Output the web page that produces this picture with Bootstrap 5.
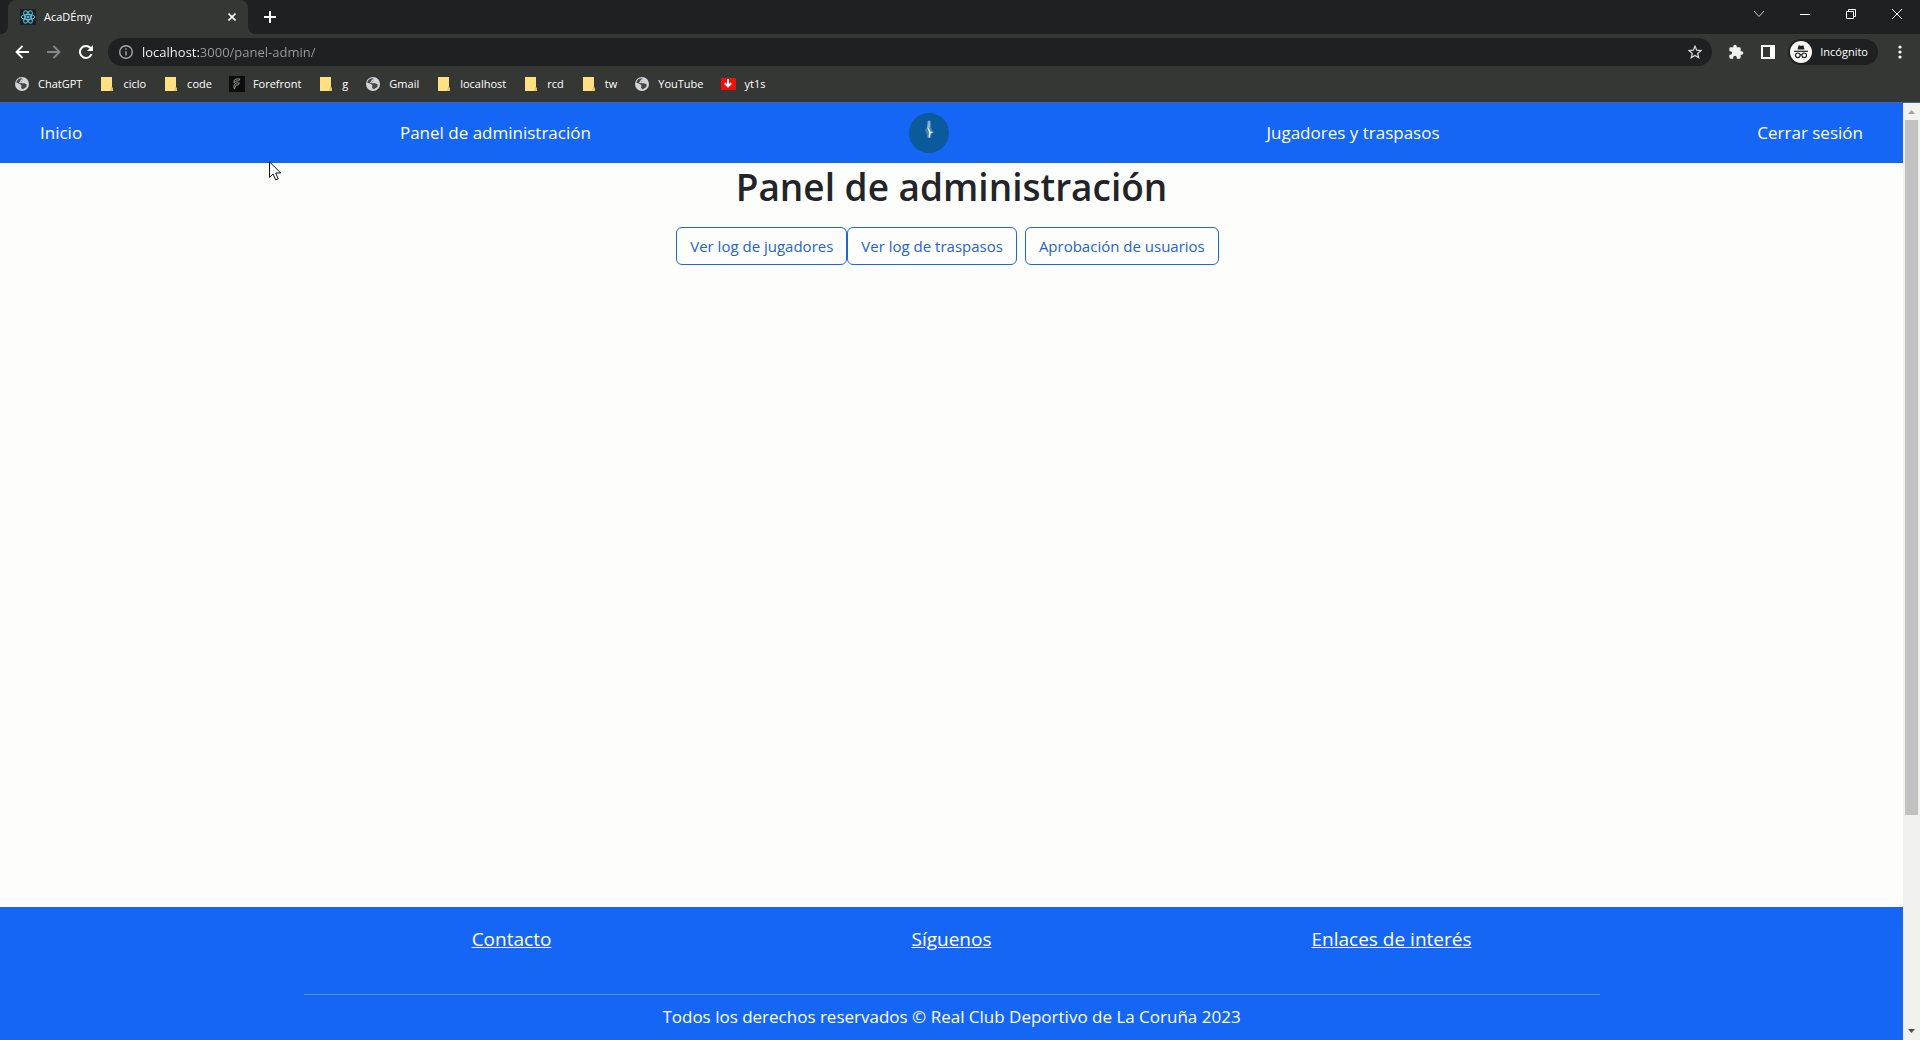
<!DOCTYPE html>
<html lang="es">
<head>
<meta charset="utf-8">
<meta name="viewport" content="width=device-width, initial-scale=1">
<title>AcaDÉmy</title>
<link href="https://cdn.jsdelivr.net/npm/bootstrap@5.3.0/dist/css/bootstrap.min.css" rel="stylesheet">
<style>
  :root { --frame: #1f2022; --toolbar: #353735; --brand-blue: #1566f5; }
  body { font-family: "Open Sans", "Noto Sans", sans-serif; background: #fdfdfc; }
  button, input { font-family: inherit; }
  svg { display: block; flex: none; }

  /* browser window */
  .chrome-ui { font-size: 11px; line-height: 16px; color: #fff; background: var(--toolbar); border-bottom: 1px solid #46649a; }
  .tab-strip { height: 34px; background: var(--frame); padding-left: 8px; }
  .browser-tab { width: 240px; background: var(--toolbar); border-radius: 8px 8px 0 0; padding: 0 12px; position: relative; }
  .browser-tab::before, .browser-tab::after { content: ""; position: absolute; bottom: 0; width: 8px; height: 8px; }
  .browser-tab::before { left: -8px; background: radial-gradient(circle at 0 0, transparent 8px, var(--toolbar) 8px); }
  .browser-tab::after { right: -8px; background: radial-gradient(circle at 100% 0, transparent 8px, var(--toolbar) 8px); }
  .ui-btn { background: none; border: 0; padding: 0; color: #fff; display: flex; align-items: center; justify-content: center; }
  .win-btn { width: 46px; height: 28px; }
  .tool-row { height: 36px; padding: 0 10px 0 6px; }
  .tool-btn { width: 32px; height: 28px; }
  .omnibox { height: 28px; border-radius: 14px; background: var(--frame); padding: 0 10px; margin-left: 6px; }
  .url-field { min-width: 0; border: 0; outline: 0; padding: 0; font-size: 13px;
    color: transparent; background: linear-gradient(90deg, #fff 57px, #999da2 57px); -webkit-background-clip: text; background-clip: text; }
  .profile-pill { height: 26px; border-radius: 13px; background: var(--frame); padding: 0 10px 0 2px; gap: 8px; }
  .bookmark-row { height: 32px; padding: 0 14px 4px; gap: 17px; }
  .bookmark-row a { color: #fff; text-decoration: none; display: flex; align-items: center; gap: 8px; }

  /* scrollbar */
  .scroll-track { width: 17px; background: #f1f1ee; }
  .scroll-end { height: 17px; }
  .scroll-body { padding: 0 2px 0 2px; }
  .scroll-thumb { height: 77%; background: #c1c1c1; }

  /* page */
  .site-nav { background: var(--brand-blue); height: 60px; padding: 0 40px; font-size: 17px; }
  .site-nav a, .site-footer a { color: #fff; }
  .site-nav a { text-decoration: none; }
  .page-title { font-size: 37px; line-height: 48px; font-weight: 600; color: #212529; }
  .panel-btn { --bs-btn-color: #2563cf; --bs-btn-border-color: #1b66e6; --bs-btn-padding-x: 13px; font-size: 15px; line-height: 24px; }
  .site-footer { background: var(--brand-blue); color: #fff; padding-top: 20px; }
  .foot-title { font-size: 19px; line-height: 24px; margin-bottom: 43px; }
  .foot-line { margin: 0 0 8px; border-color: #fff; opacity: .25; }
  .foot-note { font-size: 17px; line-height: 27px; margin-bottom: 10px; }
  .pointer { position: fixed; left: 269px; top: 161px; z-index: 5; }
</style>
<script src="https://cdn.jsdelivr.net/npm/bootstrap@5.3.0/dist/js/bootstrap.bundle.min.js"></script>
</head>
<body class="vh-100 d-flex flex-column overflow-hidden">

<svg class="d-none" aria-hidden="true">
  <symbol id="globe" viewBox="0 0 16 16"><circle cx="8" cy="8" r="7" fill="#d2d4d6"/><path d="M2.200 6.500 6 8l1.500 1.500L7 12l1.800 1.300 3.600-2.300.3-2.500-2.200-1.200H8L6.600 6.400 8.500 5l.6-2L7 2.200C4.600 2.500 3 4 2.200 6.500Z" fill="#45474a"/><path d="M7 3.500 9.500 3l-.8 2L6.500 6l1 1.300L5 7Z" fill="#d2d4d6"/></symbol>
  <symbol id="folder" viewBox="0 0 16 16"><path d="M2 1h11v11l1 3H2Z" fill="#ffe082"/><path d="M12.200 10.500 14 12v3h-3Z" fill="#f0c455"/></symbol>
</svg>

<header class="chrome-ui flex-shrink-0">
  <div class="tab-strip d-flex">
    <div class="browser-tab d-flex align-items-center gap-2">
      <svg width="16" height="16" viewBox="0 0 16 16" fill="none" stroke="#61c6de"><rect width="16" height="16" fill="#1c2126" stroke="none"/><ellipse cx="8" cy="8" rx="6.800" ry="2.600"/><ellipse cx="8" cy="8" rx="6.800" ry="2.600" transform="rotate(60 8 8)"/><ellipse cx="8" cy="8" rx="6.800" ry="2.600" transform="rotate(120 8 8)"/><circle cx="8" cy="8" r="1" fill="#61c6de"/></svg>
      <span class="flex-grow-1">AcaDÉmy</span>
      <button class="ui-btn" aria-label="Cerrar pestaña"><svg width="8" height="8" viewBox="0 0 8 8" stroke="#fff" stroke-width="1.600"><path d="M.5.5l7 7M7.500.5l-7 7"/></svg></button>
    </div>
    <button class="ui-btn ms-3" aria-label="Nueva pestaña"><svg width="12" height="12" viewBox="0 0 12 12" stroke="#fff" stroke-width="2"><path d="M6 0v12M0 6h12"/></svg></button>
    <div class="d-flex ms-auto">
      <button class="ui-btn win-btn" aria-label="Buscar pestañas"><svg width="12" height="8" viewBox="0 0 12 8" fill="none" stroke="#cfcfcf"><path d="M1 1l5 5.500L11 1"/></svg></button>
      <button class="ui-btn win-btn" aria-label="Minimizar"><svg width="10" height="10" viewBox="0 0 10 10" stroke="#fff"><path d="M0 5.500h10"/></svg></button>
      <button class="ui-btn win-btn" aria-label="Restaurar"><svg width="10" height="10" viewBox="0 0 10 10" fill="none" stroke="#fff"><path d="M.5 2.500h7v7h-7zM2.500 2.500v-2h7v7h-2"/></svg></button>
      <button class="ui-btn win-btn" aria-label="Cerrar"><svg width="10" height="10" viewBox="0 0 10 10" stroke="#fff"><path d="M0 0l10 10M10 0L0 10"/></svg></button>
    </div>
  </div>

  <div class="tool-row d-flex align-items-center">
    <button class="ui-btn tool-btn" aria-label="Atrás"><svg width="14" height="14" viewBox="0 0 14 14" fill="none" stroke="#fff" stroke-width="1.800"><path d="M14 7H1.500M7.500 1l-6 6 6 6"/></svg></button>
    <button class="ui-btn tool-btn" aria-label="Adelante"><svg width="14" height="14" viewBox="0 0 14 14" fill="none" stroke="#85878a" stroke-width="1.800"><path d="M0 7h12.500M6.500 1l6 6-6 6"/></svg></button>
    <button class="ui-btn tool-btn" aria-label="Recargar"><svg width="14" height="14" viewBox="0 0 14 14" fill="none" stroke="#fff" stroke-width="2"><path d="M12.600 9A6 6 0 1 1 11.500 3"/><path d="M14 0v6H8Z" fill="#fff" stroke="none"/></svg></button>
    <div class="omnibox d-flex align-items-center flex-grow-1">
      <svg class="me-2" width="16" height="16" viewBox="0 0 16 16" fill="none" stroke="#a3a6aa" stroke-width="1.400"><circle cx="8" cy="8" r="6.300"/><path d="M8 7.200v4.300M8 4.300v1.500"/></svg>
      <input class="url-field flex-grow-1" type="text" aria-label="Dirección" value="localhost:3000/panel-admin/">
      <button class="ui-btn" aria-label="Añadir a marcadores"><svg width="14" height="14" viewBox="0 0 14 14" fill="none" stroke="#d5d5d5" stroke-width="1.300"><path d="M7 1.300 8.700 5.200l4.200.4-3.200 2.800 1 4.200L7 10.400l-3.700 2.200 1-4.200L1.100 5.600l4.200-.4Z"/></svg></button>
    </div>
    <button class="ui-btn tool-btn ms-1" aria-label="Extensiones"><svg class="ms-2" width="16" height="16" viewBox="0 0 24 24" fill="#f1f1f1"><path d="M20.500 11H19V7a2 2 0 0 0-2-2h-4V3.500a2.500 2.500 0 0 0-5 0V5H4a2 2 0 0 0-2 2v3.800h1.500a2.700 2.700 0 0 1 0 5.400H2V20a2 2 0 0 0 2 2h3.800v-1.500a2.700 2.700 0 0 1 5.400 0V22H17a2 2 0 0 0 2-2v-4h1.500a2.500 2.500 0 0 0 0-5Z"/></svg></button>
    <button class="ui-btn tool-btn" aria-label="Panel lateral"><svg class="ms-2" width="14" height="14" viewBox="0 0 14 14"><path d="M0 0h14v14H0ZM2 2v10h7V2Z" fill="#fff" fill-rule="evenodd"/></svg></button>
    <button class="ui-btn profile-pill mx-2" aria-label="Incógnito">
      <svg width="22" height="22" viewBox="0 0 22 22"><circle cx="11" cy="11" r="11" fill="#f6f6f4"/><path d="M7.500 8.500 8.500 4.500h1.500l1 .5 1-.5h1.500l1 4Z" fill="#222"/><path d="M4 10.300h14" stroke="#222" stroke-width="1.200"/><g fill="none" stroke="#222" stroke-width="1.100"><circle cx="7.800" cy="14.300" r="2.300"/><circle cx="14.200" cy="14.300" r="2.300"/><path d="M10 14q1-.7 2 0"/></g></svg>
      <span>Incógnito</span>
    </button>
    <button class="ui-btn ms-1" aria-label="Menú"><svg width="20" height="14" viewBox="0 0 20 14" fill="#fff"><circle cx="10" cy="2" r="1.600"/><circle cx="10" cy="7" r="1.600"/><circle cx="10" cy="12" r="1.600"/></svg></button>
  </div>

  <nav class="bookmark-row d-flex align-items-center" aria-label="Marcadores">
    <a href="#"><svg width="16" height="16"><use href="#globe"/></svg>ChatGPT</a>
    <a href="#"><svg width="16" height="16"><use href="#folder"/></svg>ciclo</a>
    <a href="#"><svg width="16" height="16"><use href="#folder"/></svg>code</a>
    <a href="#"><svg width="16" height="16" viewBox="0 0 16 16" fill="none" stroke="#8c8c8c"><rect width="16" height="16" fill="#0c0c0c" stroke="none"/><path d="M5 4.500 7 3h4L9.500 5H6.500L5 7ZM5 9l2-2h3.500L9 9H7l-1.500 4L5 12Z"/></svg>Forefront</a>
    <a href="#"><svg width="16" height="16"><use href="#folder"/></svg>g</a>
    <a href="#"><svg width="16" height="16"><use href="#globe"/></svg>Gmail</a>
    <a href="#"><svg width="16" height="16"><use href="#folder"/></svg>localhost</a>
    <a href="#"><svg width="16" height="16"><use href="#folder"/></svg>rcd</a>
    <a href="#"><svg width="16" height="16"><use href="#folder"/></svg>tw</a>
    <a href="#"><svg width="16" height="16"><use href="#globe"/></svg>YouTube</a>
    <a href="#"><svg width="16" height="16" viewBox="0 0 16 16"><rect x="1" y="2" width="15" height="12" rx="1" fill="#f40d0d"/><path d="M8 3v7M4.800 7.200 8 10.400l3.200-3.200" fill="none" stroke="#fff" stroke-width="2"/></svg>yt1s</a>
  </nav>
</header>

<div class="d-flex flex-grow-1 overflow-hidden">
  <div class="d-flex flex-column flex-grow-1">
    <nav class="site-nav d-flex align-items-center justify-content-between" aria-label="Principal">
      <a href="#">Inicio</a>
      <a href="#">Panel de administración</a>
      <a href="#" aria-label="AcaDÉmy"><svg width="40" height="40" viewBox="0 0 40 40"><circle cx="20" cy="20" r="20" fill="#0a5a9c"/><path d="M18 8.500 20 7l2 1.500v6l1.500 2.500-1 4-1 4h-3l-1-4-1.500-4 2-3Z" fill="#3f84b4"/><path d="M19.500 8h1.500v6l-1 3-2-2Z" fill="#8db5d0"/><path d="M18.500 15l2 1 1 2.500 3.500.5-3.500 1.500-.5 4h-1.500l.5-5Z" fill="#dfeaf2"/></svg></a>
      <a href="#">Jugadores y traspasos</a>
      <a href="#">Cerrar sesión</a>
    </nav>

    <main class="flex-grow-1 text-center">
      <h1 class="page-title mb-3">Panel de administración</h1>
      <div class="d-flex justify-content-center">
        <button type="button" class="btn btn-outline-primary panel-btn">Ver log de jugadores</button>
        <button type="button" class="btn btn-outline-primary panel-btn me-2">Ver log de traspasos</button>
        <button type="button" class="btn btn-outline-primary panel-btn me-2">Aprobación de usuarios</button>
      </div>
    </main>

    <footer class="site-footer text-center">
      <div class="container">
        <div class="row">
          <div class="col"><p class="foot-title"><a href="#">Contacto</a></p></div>
          <div class="col"><p class="foot-title"><a href="#">Síguenos</a></p></div>
          <div class="col"><p class="foot-title"><a href="#">Enlaces de interés</a></p></div>
        </div>
        <hr class="foot-line">
        <p class="foot-note">Todos los derechos reservados © Real Club Deportivo de La Coruña 2023</p>
      </div>
    </footer>
  </div>

  <div class="scroll-track d-flex flex-column flex-shrink-0" aria-hidden="true">
    <svg class="scroll-end" width="17" height="17" viewBox="0 0 17 17"><path d="M5 11l3.500-4 3.500 4Z" fill="#a3a3a3"/></svg>
    <div class="scroll-body flex-grow-1"><div class="scroll-thumb"></div></div>
    <svg class="scroll-end" width="17" height="17" viewBox="0 0 17 17"><path d="M5 6l3.500 4L12 6Z" fill="#505050"/></svg>
  </div>
</div>

<svg class="pointer" width="13" height="20" viewBox="0 0 13 20" aria-hidden="true"><path d="M.5.800v15.500l3.600-3.400 2.500 6 2.600-1.100-2.500-5.800h5Z" fill="#fff" stroke="#111"/></svg>
</body>
</html>
